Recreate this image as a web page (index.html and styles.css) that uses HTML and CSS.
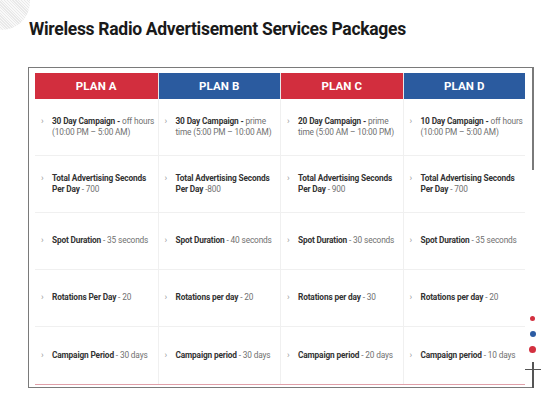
FILE: index.html
```html
<!DOCTYPE html>
<html>
<head>
<meta charset="utf-8">
<link rel="stylesheet" href="styles.css">
</head>
<body>
<div class="deco-circle"></div>
<h1 class="title">Wireless Radio Advertisement Services Packages</h1>
<div class="frame">
  <div class="edge">
    <div class="edge-line"></div>
    <div class="dot dot-red-sm"></div>
    <div class="dot dot-blue"></div>
    <div class="dot dot-red"></div>
    <div class="cross"></div>
  </div>
  <div class="table">
    <div class="head red">PLAN A</div>
    <div class="head blue">PLAN B</div>
    <div class="head red">PLAN C</div>
    <div class="head blue">PLAN D</div>

    <div class="cell"><span class="chev">›</span><p><b>30 Day Campaign - </b>off hours<br>(10:00 PM – 5:00 AM)</p></div>
    <div class="cell"><span class="chev">›</span><p><b>30 Day Campaign - </b>prime<br>time (5:00 PM – 10:00 AM)</p></div>
    <div class="cell"><span class="chev">›</span><p><b>20 Day Campaign - </b>prime<br>time (5:00 AM – 10:00 PM)</p></div>
    <div class="cell"><span class="chev">›</span><p><b>10 Day Campaign - </b>off hours<br>(10:00 PM – 5:00 AM)</p></div>

    <div class="cell"><span class="chev">›</span><p><b>Total Advertising Seconds<br>Per Day</b> - 700</p></div>
    <div class="cell"><span class="chev">›</span><p><b>Total Advertising Seconds<br>Per Day</b> -800</p></div>
    <div class="cell"><span class="chev">›</span><p><b>Total Advertising Seconds<br>Per Day</b> - 900</p></div>
    <div class="cell"><span class="chev">›</span><p><b>Total Advertising Seconds<br>Per Day</b> - 700</p></div>

    <div class="cell"><span class="chev">›</span><p><b>Spot Duration</b> - 35 seconds</p></div>
    <div class="cell"><span class="chev">›</span><p><b>Spot Duration</b> - 40 seconds</p></div>
    <div class="cell"><span class="chev">›</span><p><b>Spot Duration</b> - 30 seconds</p></div>
    <div class="cell"><span class="chev">›</span><p><b>Spot Duration</b> - 35 seconds</p></div>

    <div class="cell"><span class="chev">›</span><p><b>Rotations Per Day</b> - 20</p></div>
    <div class="cell"><span class="chev">›</span><p><b>Rotations per day</b> - 20</p></div>
    <div class="cell"><span class="chev">›</span><p><b>Rotations per day</b> - 30</p></div>
    <div class="cell"><span class="chev">›</span><p><b>Rotations per day</b> - 20</p></div>

    <div class="cell last"><span class="chev">›</span><p><b>Campaign Period</b> - 30 days</p></div>
    <div class="cell last"><span class="chev">›</span><p><b>Campaign period</b> - 30 days</p></div>
    <div class="cell last"><span class="chev">›</span><p><b>Campaign period</b> - 20 days</p></div>
    <div class="cell last"><span class="chev">›</span><p><b>Campaign period</b> - 10 days</p></div>
  </div>
</div>
</body>
</html>
```
FILE: styles.css
```css
* { box-sizing: border-box; }
html, body { margin: 0; padding: 0; background: #fff; }
body {
  width: 560px;
  height: 420px;
  position: relative;
  overflow: hidden;
  font-family: Roboto, "Liberation Sans", sans-serif;
}
.deco-circle {
  position: absolute;
  left: -26px;
  top: -26px;
  width: 56px;
  height: 56px;
  border-radius: 50%;
  background: repeating-linear-gradient(45deg, #e9e9e9 0 1px, #f9f9f9 1px 2px);
}
.title {
  margin: 0;
  padding: 17px 0 0 29px;
  font-size: 17.5px;
  font-weight: 700;
  letter-spacing: -0.3px;
  color: #1a1a1a;
  line-height: 24px;
  position: relative;
}
.frame {
  position: relative;
  margin: 26px 0 0 28px;
  width: 505px;
  height: 321px;
  border: 1.5px solid #7a7a7a;
  border-right: none;
  padding: 4.5px 7px 0 6px;
}
.edge { position: absolute; right: 0; top: -1.5px; bottom: -1.5px; width: 0; }
.edge-line { position: absolute; left: -1px; top: 0; width: 1.5px; height: 103px; background: #7a7a7a; }
.dot { position: absolute; border-radius: 50%; }
.dot-red-sm { width: 5px; height: 5px; left: -3px; top: 249px; background: #d3303f; }
.dot-blue { width: 6px; height: 6px; left: -3.5px; top: 264px; background: #2c5ca3; }
.dot-red { width: 7px; height: 7px; left: -4px; top: 279px; background: #d3303f; }
.cross { position: absolute; left: -1px; top: 295px; width: 1.5px; height: 26px; background: #555; }
.cross::before { content: ""; position: absolute; left: -7px; top: 7px; width: 16px; height: 1.5px; background: #555; }
.table {
  display: grid;
  grid-template-columns: repeat(4, 1fr);
  grid-template-rows: 26px repeat(5, 57px);
  width: 490px;
  border-bottom: 1.5px solid #e0a0a9;
}
.head {
  color: #fff;
  font-weight: 700;
  font-size: 11.5px;
  display: flex;
  align-items: center;
  justify-content: center;
  letter-spacing: 0.1px;
}
.head + .head { border-left: 1px solid #e8e8e8; }
.red { background: #d22e3e; }
.blue { background: #2b5b9f; }
.cell {
  display: flex;
  align-items: center;
  padding: 0 2px 0 6px;
  border-bottom: 1px solid #f0f0f0;
  font-size: 8.3px;
  line-height: 10.5px;
  color: #707070;
  letter-spacing: -0.15px;
  white-space: nowrap;
}
.cell.last { border-bottom: none; }
.cell:not(:nth-child(4n+1)) { border-left: 1px solid #f0f0f0; }
.chev { flex: none; width: 11px; align-self: center; color: #999; font-size: 9px; line-height: 10.5px; }
.cell:nth-child(-n+12) .chev { margin-bottom: 10.5px; }
.cell p { margin: 0; }
.cell p b { color: #333; font-weight: 700; }
```
